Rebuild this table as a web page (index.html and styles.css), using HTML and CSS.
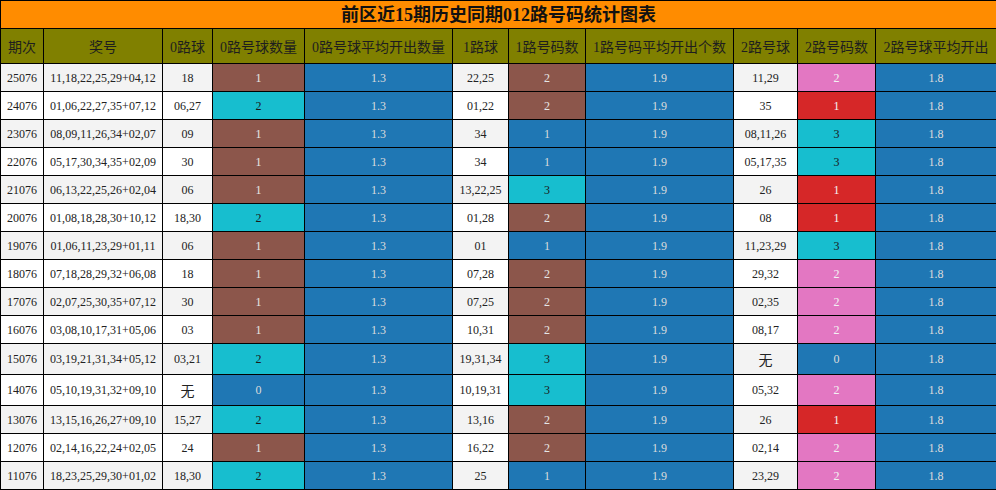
FILE: index.html
```html
<!DOCTYPE html>
<html lang="zh">
<head>
<meta charset="utf-8">
<title>前区近15期历史同期012路号码统计图表</title>
<link rel="stylesheet" href="styles.css">
</head>
<body>
<table class="chart">
  <colgroup>
    <col class="c-period"><col class="c-nums"><col class="c-r0"><col class="c-r0n"><col class="c-r0a">
    <col class="c-r1"><col class="c-r1n"><col class="c-r1a"><col class="c-r2"><col class="c-r2n"><col class="c-r2a">
  </colgroup>
  <thead>
    <tr class="title-row"><th colspan="11" class="title">前区近15期历史同期012路号码统计图表</th></tr>
    <tr class="head-row">
      <th>期次</th><th>奖号</th><th>0路球</th><th>0路号球数量</th><th>0路号球平均开出数量</th>
      <th>1路球</th><th>1路号码数</th><th>1路号码平均开出个数</th><th>2路号球</th><th>2路号码数</th><th>2路号球平均开出</th>
    </tr>
  </thead>
  <tbody>
    <tr class="odd"><td>25076</td><td>11,18,22,25,29+04,12</td><td>18</td><td class="brown">1</td><td class="blue">1.3</td><td>22,25</td><td class="brown">2</td><td class="blue">1.9</td><td>11,29</td><td class="pink">2</td><td class="blue">1.8</td></tr>
    <tr><td>24076</td><td>01,06,22,27,35+07,12</td><td>06,27</td><td class="cyan">2</td><td class="blue">1.3</td><td>01,22</td><td class="brown">2</td><td class="blue">1.9</td><td>35</td><td class="red">1</td><td class="blue">1.8</td></tr>
    <tr class="odd"><td>23076</td><td>08,09,11,26,34+02,07</td><td>09</td><td class="brown">1</td><td class="blue">1.3</td><td>34</td><td class="blue">1</td><td class="blue">1.9</td><td>08,11,26</td><td class="cyan">3</td><td class="blue">1.8</td></tr>
    <tr><td>22076</td><td>05,17,30,34,35+02,09</td><td>30</td><td class="brown">1</td><td class="blue">1.3</td><td>34</td><td class="blue">1</td><td class="blue">1.9</td><td>05,17,35</td><td class="cyan">3</td><td class="blue">1.8</td></tr>
    <tr class="odd"><td>21076</td><td>06,13,22,25,26+02,04</td><td>06</td><td class="brown">1</td><td class="blue">1.3</td><td>13,22,25</td><td class="cyan">3</td><td class="blue">1.9</td><td>26</td><td class="red">1</td><td class="blue">1.8</td></tr>
    <tr><td>20076</td><td>01,08,18,28,30+10,12</td><td>18,30</td><td class="cyan">2</td><td class="blue">1.3</td><td>01,28</td><td class="brown">2</td><td class="blue">1.9</td><td>08</td><td class="red">1</td><td class="blue">1.8</td></tr>
    <tr class="odd"><td>19076</td><td>01,06,11,23,29+01,11</td><td>06</td><td class="brown">1</td><td class="blue">1.3</td><td>01</td><td class="blue">1</td><td class="blue">1.9</td><td>11,23,29</td><td class="cyan">3</td><td class="blue">1.8</td></tr>
    <tr><td>18076</td><td>07,18,28,29,32+06,08</td><td>18</td><td class="brown">1</td><td class="blue">1.3</td><td>07,28</td><td class="brown">2</td><td class="blue">1.9</td><td>29,32</td><td class="pink">2</td><td class="blue">1.8</td></tr>
    <tr class="odd"><td>17076</td><td>02,07,25,30,35+07,12</td><td>30</td><td class="brown">1</td><td class="blue">1.3</td><td>07,25</td><td class="brown">2</td><td class="blue">1.9</td><td>02,35</td><td class="pink">2</td><td class="blue">1.8</td></tr>
    <tr><td>16076</td><td>03,08,10,17,31+05,06</td><td>03</td><td class="brown">1</td><td class="blue">1.3</td><td>10,31</td><td class="brown">2</td><td class="blue">1.9</td><td>08,17</td><td class="pink">2</td><td class="blue">1.8</td></tr>
    <tr class="odd tall"><td>15076</td><td>03,19,21,31,34+05,12</td><td>03,21</td><td class="cyan">2</td><td class="blue">1.3</td><td>19,31,34</td><td class="cyan">3</td><td class="blue">1.9</td><td class="none">无</td><td class="blue">0</td><td class="blue">1.8</td></tr>
    <tr class="tall"><td>14076</td><td>05,10,19,31,32+09,10</td><td class="none">无</td><td class="blue">0</td><td class="blue">1.3</td><td>10,19,31</td><td class="cyan">3</td><td class="blue">1.9</td><td>05,32</td><td class="pink">2</td><td class="blue">1.8</td></tr>
    <tr class="odd"><td>13076</td><td>13,15,16,26,27+09,10</td><td>15,27</td><td class="cyan">2</td><td class="blue">1.3</td><td>13,16</td><td class="brown">2</td><td class="blue">1.9</td><td>26</td><td class="red">1</td><td class="blue">1.8</td></tr>
    <tr><td>12076</td><td>02,14,16,22,24+02,05</td><td>24</td><td class="brown">1</td><td class="blue">1.3</td><td>16,22</td><td class="brown">2</td><td class="blue">1.9</td><td>02,14</td><td class="pink">2</td><td class="blue">1.8</td></tr>
    <tr class="odd"><td>11076</td><td>18,23,25,29,30+01,02</td><td>18,30</td><td class="cyan">2</td><td class="blue">1.3</td><td>25</td><td class="blue">1</td><td class="blue">1.9</td><td>23,29</td><td class="pink">2</td><td class="blue">1.8</td></tr>
  </tbody>
</table>
</body>
</html>
```

FILE: styles.css
```css
html, body {
  margin: 0;
  padding: 0;
  background: #ffffff;
}

.chart {
  border-collapse: collapse;
  table-layout: fixed;
  width: 996px;
  font-family: "Liberation Serif", "Noto Sans CJK SC", serif;
  color: #222222;
}

.c-period { width: 43px; }
.c-nums { width: 119px; }
.c-r0 { width: 50px; }
.c-r0n { width: 92px; }
.c-r0a { width: 148px; }
.c-r1 { width: 56px; }
.c-r1n { width: 77px; }
.c-r1a { width: 148px; }
.c-r2 { width: 64px; }
.c-r2n { width: 78px; }
.c-r2a { width: 121px; }

.chart th,
.chart td {
  border: 1.5px solid #000000;
  padding: 0;
  text-align: center;
  white-space: nowrap;
  overflow: hidden;
}

.title-row { height: 28px; }

.title {
  background: #ff8c00;
  color: #111111;
  font-size: 18px;
  font-weight: bold;
  line-height: 24px;
}

.head-row { height: 35px; }

.head-row th {
  background: #808000;
  color: #1e1e1e;
  font-size: 14px;
  font-weight: normal;
}

.chart tbody tr { height: 28px; }
.chart tbody tr.tall { height: 31px; }

.chart td {
  font-size: 12px;
  line-height: 16px;
  background: #ffffff;
}

.chart tr.odd td { background: #f3f3f3; }

.chart td.none { font-size: 14px; font-family: "Noto Sans CJK SC", sans-serif; }

.chart tr td.brown { background: #8c564b; color: #e6e6e6; }
.chart tr td.blue { background: #1f77b4; color: #dcdcdc; }
.chart tr td.cyan { background: #17becf; color: #1a1a1a; }
.chart tr td.pink { background: #e377c2; color: #f2f2f2; }
.chart tr td.red { background: #d62728; color: #f2f2f2; }
```
